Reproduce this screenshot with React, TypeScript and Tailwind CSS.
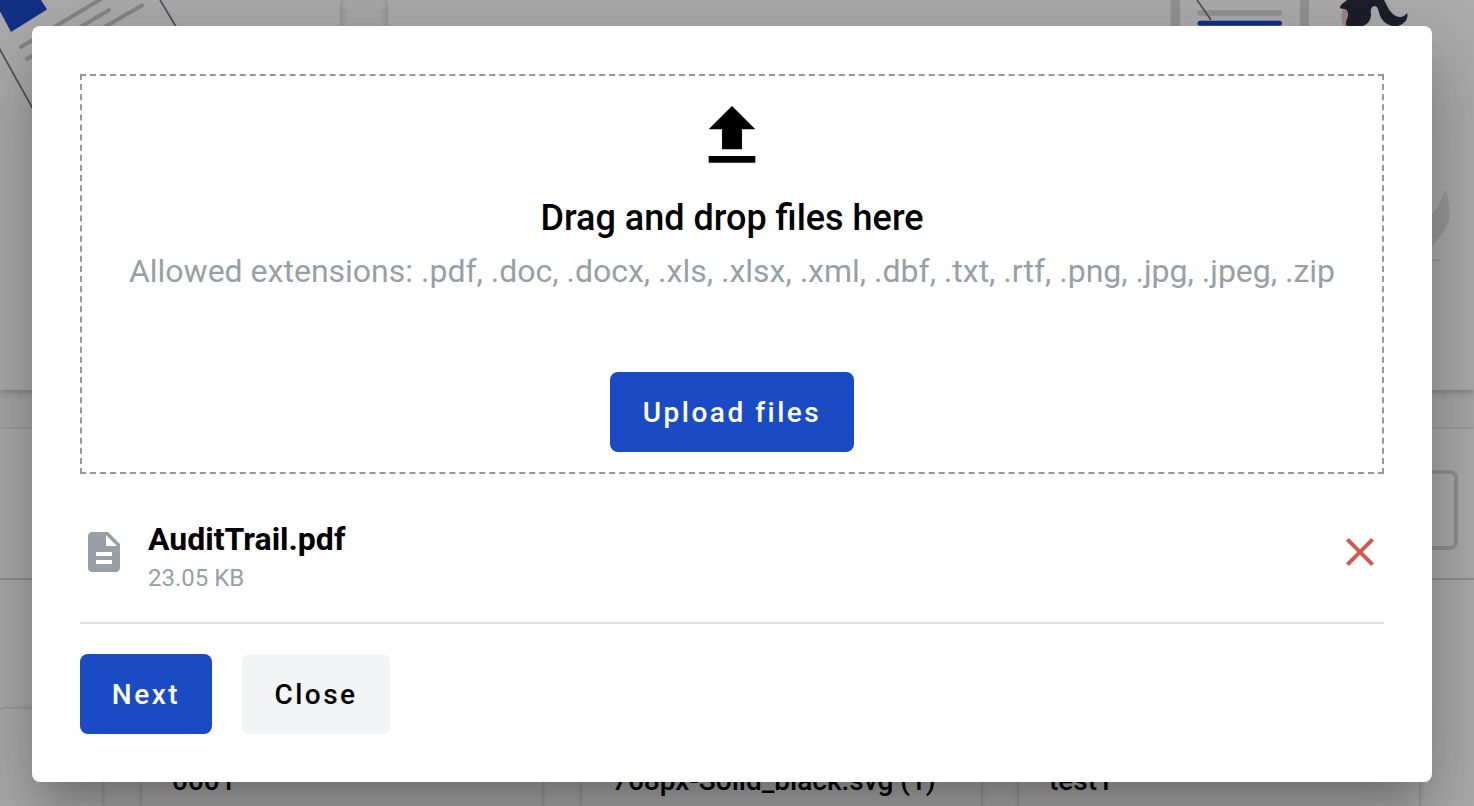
import React from "react";

function DocumentArt() {
  return (
    <svg className="block h-[120px] w-[200px]" viewBox="0 0 200 120" fill="none">
      <path d="M160 0L184 40M-2 46L48 136" stroke="#7d7d88" strokeWidth="1.8" />
      <path d="M-6 0L11 32L47 9.500L41 0Z" fill="#1b4bc8" />
      <g stroke="#c8c8c8" strokeWidth="4" strokeLinecap="round">
        <path d="M21 47L101 -1M27 59L109 10M75 44L142 5.500" />
      </g>
    </svg>
  );
}

function PersonArt() {
  return (
    <svg className="block h-[280px] w-[304px]" viewBox="1170 0 304 280" fill="none">
      <path d="M1170.500 0h9.500v40h-9.500zM1300 0h9v40h-9z" fill="#dadada" />
      <path d="M1200 13H1279.500" stroke="#dadada" strokeWidth="5.500" strokeLinecap="round" />
      <path d="M1197 0L1211 20" stroke="#7d7d88" strokeWidth="1.8" />
      <path d="M1200 23.200H1279.500" stroke="#1b4bc8" strokeWidth="5" strokeLinecap="round" />
      <path d="M1343 9h9v22h-6c-5-7-6-15-3-22z" fill="#e8cdc2" />
      <path
        d="M1347 0C1344 3 1340 4 1340 8C1342 10 1347 7 1348 13C1349 19 1344 20 1347 27H1358C1368 26 1371 20 1371 14C1370 9 1372 6 1375 6C1379 7 1378 12 1381 18C1385 24 1391 27 1398 26C1405 24 1409 18 1407 13C1403 19 1396 18 1391 12C1387 7 1386 3 1384 0Z"
        fill="#2f2e41"
      />
      <path d="M1446 190C1452 211 1451 222 1442 234L1420 262V225C1434 219 1438 203 1446 190Z" fill="#e6e6e6" />
      <path d="M1420 260.500H1440" stroke="#e0e0e0" strokeWidth="2" />
    </svg>
  );
}

const tile =
  "h-[200px] shrink-0 rounded-t bg-white px-[30px] pt-14 text-[28px] font-medium leading-8 whitespace-nowrap shadow-[0_0_5px_rgba(0,0,0,0.25)]";

function PageBehind() {
  return (
    <div className="flex h-full flex-col overflow-hidden bg-[#fafafa]" aria-hidden="true">
      <div className="flex h-[390px] shrink-0 gap-12">
        <div className="w-[340px] shrink-0 bg-white shadow-[0_2px_8px_rgba(0,0,0,0.25)]">
          <DocumentArt />
        </div>
        <div className="flex grow justify-end bg-white shadow-[0_2px_8px_rgba(0,0,0,0.25)]">
          <PersonArt />
        </div>
      </div>
      <div className="mt-[39px] flex h-[151px] shrink-0 items-start justify-end border-b-2 border-[#d6d6d6] bg-white pt-[41px] pr-4 shadow-[0_-1px_3px_rgba(0,0,0,0.12)]">
        <div className="h-20 w-[400px] rounded-lg border-4 border-[#d8d8d8]" />
      </div>
      <div className="flex shrink-0 bg-white pt-[129px]">
        <div className={`${tile} w-[102px]`} />
        <div className={`${tile} ml-10 w-[400px]`}>0001</div>
        <div className={`${tile} ml-10 w-[399px]`}>768px-Solid_black.svg (1)</div>
        <div className={`${tile} ml-[38px] w-[400px]`}>test1</div>
      </div>
    </div>
  );
}

function UploadIcon() {
  return (
    <svg className="size-20" viewBox="0 0 24 24" fill="currentColor">
      <path d="M5 20h14v-2H5v2zM5 10h4v6h6v-6h4l-7-7-7 7z" />
    </svg>
  );
}

function FileIcon() {
  return (
    <svg className="size-12 shrink-0 text-[#989fa7]" viewBox="0 0 24 24" fill="currentColor">
      <path d="M14 2H6c-1.100 0-1.990.9-1.990 2L4 20c0 1.100.89 2 1.990 2H18c1.100 0 2-.9 2-2V8l-6-6zm2 16H8v-2h8v2zm0-4H8v-2h8v2zm-3-5V3.500L18.500 9H13z" />
    </svg>
  );
}

function CloseIcon() {
  return (
    <svg className="size-12" viewBox="0 0 24 24" fill="currentColor">
      <path d="M19 6.410L17.590 5 12 10.590 6.410 5 5 6.410 10.590 12 5 17.590 6.410 19 12 13.410 17.590 19 19 17.590 13.410 12z" />
    </svg>
  );
}

function Button({ children, className }: { children: React.ReactNode; className: string }) {
  return (
    <button
      type="button"
      className={`flex h-20 items-center justify-center rounded-lg pt-0.5 text-[28px] font-medium tracking-[2.5px] ${className}`}
    >
      {children}
    </button>
  );
}

export default function App() {
  return (
    <div className="relative h-screen w-full overflow-hidden font-['Roboto',sans-serif] text-black">
      <PageBehind />
      <div className="absolute inset-0 flex justify-center bg-black/32 pt-[26px] pr-[10px]">
        <div
          role="dialog"
          className="flex h-[756px] w-[1400px] flex-col rounded-lg bg-white p-12 shadow-[0_22px_30px_-14px_rgba(0,0,0,0.2),0_48px_76px_6px_rgba(0,0,0,0.14),0_18px_92px_16px_rgba(0,0,0,0.12)]"
        >
          <div className="flex h-[400px] shrink-0 flex-col items-center border-2 border-dashed border-[#979797] pt-5">
            <UploadIcon />
            <h2 className="mt-5 text-[36px] leading-[44px] font-medium whitespace-nowrap">Drag and drop files here</h2>
            <p className="mt-[9px] text-[32px] leading-[44px] whitespace-nowrap text-[#989fa7]">
              Allowed extensions: .pdf, .doc, .docx, .xls, .xlsx, .xml, .dbf, .txt, .rtf, .png, .jpg, .jpeg, .zip
            </p>
            <Button className="mt-[79px] w-[244px] bg-[#1b4bc4] text-white">Upload files</Button>
          </div>
          <div className="mt-10 flex h-[110px] shrink-0 border-b-2 border-[#e0e0e0]">
            <div className="flex grow pt-[5px]">
              <div className="pt-[9px]">
                <FileIcon />
              </div>
              <div className="ml-5">
                <div className="text-[32px] leading-10 font-bold">AuditTrail.pdf</div>
                <div className="mt-[3px] text-[24px] leading-8 text-[#989fa7]">23.05 KB</div>
              </div>
            </div>
            <button type="button" aria-label="Remove file" className="mt-3.5 size-12 text-[#d05a52]">
              <CloseIcon />
            </button>
          </div>
          <div className="mt-[30px] flex gap-[30px]">
            <Button className="w-[132px] bg-[#1b4bc4] text-white">Next</Button>
            <Button className="w-[148px] bg-[#f3f4f6]">Close</Button>
          </div>
        </div>
      </div>
    </div>
  );
}
